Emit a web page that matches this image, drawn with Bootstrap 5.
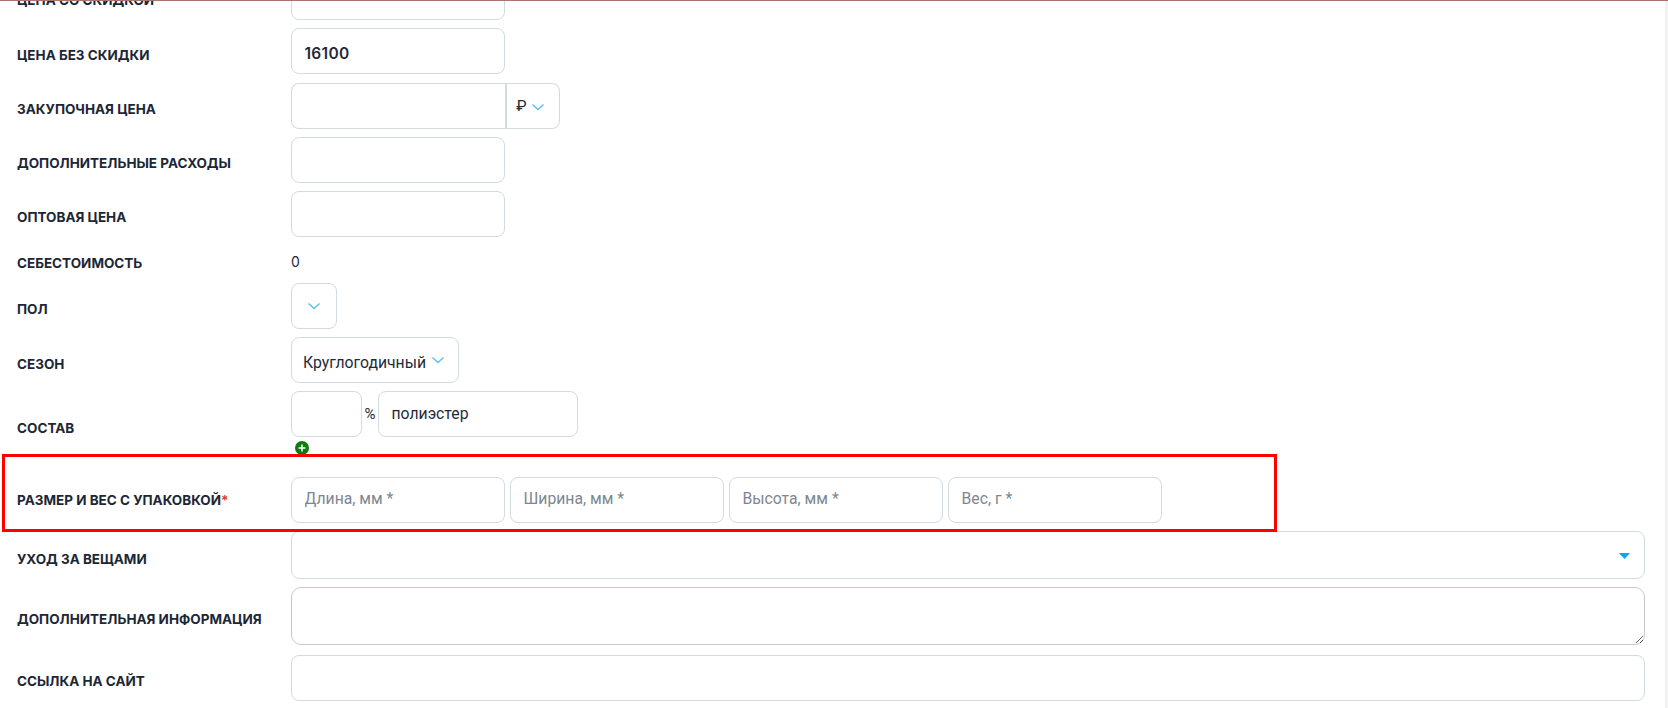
<!DOCTYPE html>
<html lang="ru"><head><meta charset="utf-8"><title>Форма</title>
<link rel="stylesheet" href="https://cdn.jsdelivr.net/npm/bootstrap@5.3.0/dist/css/bootstrap.min.css">
<style>
html,body{height:708px;overflow:hidden;background:#fff}
body{font-family:Roboto,sans-serif;color:#1f2a37;font-size:15.75px}
.topline{height:1px;background:#a5756e;position:absolute;top:0;left:0;right:0;z-index:5}
.sbar{position:absolute;top:1px;right:0;bottom:0;width:3px;background:#f1f1f1}
.formwrap{margin-top:-26px;padding:0 23px 0 17px}
.frow{margin-bottom:8.25px}
.flabel{width:274px;flex:none;font-family:Inter,sans-serif;font-weight:700;font-size:13.5px;text-transform:uppercase;color:#1c2735;padding-top:7px;margin:0}
.flabel i{color:#e53935;font-style:normal}
.fld{height:46px;border:1px solid #d3dbe0;border-radius:8px;background:#fff;padding:0 12.5px;font-size:15.75px;color:#1f2a37;font-family:Roboto,sans-serif}
.fld::placeholder{color:#7d8790;opacity:1}
.w214{width:214px}.w71{width:71px}.w200{width:200px}
.pricev{font-family:Inter,sans-serif;font-weight:600;font-size:15.5px;letter-spacing:.02em;padding-top:5px}
.joinl{border-radius:8px 0 0 8px;border-right:0}
.selbox{height:46px;border:1px solid #d3dbe0;border-radius:8px;gap:4px}
.cur{width:55px;border-left-width:2px;border-radius:0 8px 8px 0;font-size:15.5px;padding:2px 5px 0 0}
.w46{width:46px}.w168{width:168px;padding:0 0 0 11px;gap:5px}
.seztext{padding-top:6px}
.chev{width:14px;height:8px;flex:none}
.static0{height:29.5px;font-size:14px;font-family:Inter,sans-serif;padding-top:3px}
.pct{font-size:15px;width:16px;text-align:center}
.addbtn{width:14px;height:14px;margin:4.5px 0 0 4px;display:block}
.redbox{border:3px solid #f00;position:absolute;left:2px;top:454px;width:1275px;height:78px;z-index:4;pointer-events:none}
.sezrow{margin-bottom:7.5px}
.lblcomp{padding-top:11px}
.sizerow{margin-top:22px;margin-bottom:8px}
.lblsize{padding:0 0 1px}
.sizes{gap:5px}
.sizes .fld{padding-bottom:3px}
.carerow{margin-bottom:7.25px}
.care{height:48px;position:relative}
.caret{position:absolute;right:14px;top:21px;width:11px;height:6px}
.txa{height:58px;border-color:#c8c8c8;border-radius:10px;padding:8px 13px}
.txrow{margin-bottom:10px}
</style></head><body>
<div class="topline"></div>
<div class="sbar"></div>
<div class="redbox"></div>
<form class="formwrap">
 <div class="frow d-flex align-items-center"><label class="flabel">Цена со скидкой</label><input class="form-control fld w214"></div>
 <div class="frow d-flex align-items-center"><label class="flabel">Цена без скидки</label><input class="form-control fld w214 pricev" value="16100"></div>
 <div class="frow d-flex align-items-center"><label class="flabel">Закупочная цена</label><input class="form-control fld w214 joinl"><div class="selbox cur d-flex align-items-center justify-content-center">₽<svg class="chev" viewBox="0 0 14 8"><path d="M1.5 1.5 7 6.5l5.5-5" fill="none" stroke="#55c0ee" stroke-width="1.3"/></svg></div></div>
 <div class="frow d-flex align-items-center"><label class="flabel">Дополнительные расходы</label><input class="form-control fld w214"></div>
 <div class="frow d-flex align-items-center"><label class="flabel">Оптовая цена</label><input class="form-control fld w214"></div>
 <div class="frow d-flex align-items-center"><label class="flabel">Себестоимость</label><div class="static0 d-flex align-items-center">0</div></div>
 <div class="frow d-flex align-items-center"><label class="flabel">Пол</label><div class="selbox w46 d-flex align-items-center justify-content-center"><svg class="chev" viewBox="0 0 14 8"><path d="M1.5 1.5 7 6.5l5.5-5" fill="none" stroke="#55c0ee" stroke-width="1.3"/></svg></div></div>
 <div class="sezrow d-flex align-items-center"><label class="flabel">Сезон</label><div class="selbox w168 d-flex align-items-center"><span class="seztext">Круглогодичный</span><svg class="chev" viewBox="0 0 14 8"><path d="M1.5 1.5 7 6.5l5.5-5" fill="none" stroke="#55c0ee" stroke-width="1.3"/></svg></div></div>
 <div class="d-flex align-items-center"><label class="flabel lblcomp">Состав</label>
  <div>
   <div class="d-flex align-items-center"><input class="form-control fld w71"><span class="pct">%</span><input class="form-control fld w200" value="полиэстер"></div>
   <svg class="addbtn" viewBox="0 0 14 14"><circle cx="7" cy="7" r="7" fill="#0a7d0a"/><path d="M7 3.5v7M3.5 7h7" stroke="#fff" stroke-width="1.5"/></svg>
  </div>
 </div>
 <div class="sizerow d-flex align-items-center"><label class="flabel lblsize">Размер и вес с упаковкой<i>*</i></label><div class="sizes d-flex"><input class="form-control fld w214" placeholder="Длина, мм *"><input class="form-control fld w214" placeholder="Ширина, мм *"><input class="form-control fld w214" placeholder="Высота, мм *"><input class="form-control fld w214" placeholder="Вес, г *"></div></div>
 <div class="carerow d-flex align-items-center"><label class="flabel">Уход за вещами</label><div class="fld care flex-grow-1"><svg class="caret" viewBox="0 0 11 6"><path d="M0 0h11L5.5 6z" fill="#0aa5ee"/></svg></div></div>
 <div class="txrow d-flex align-items-center"><label class="flabel">Дополнительная информация</label><textarea class="form-control fld txa flex-grow-1 w-auto"></textarea></div>
 <div class="frow d-flex align-items-center"><label class="flabel">Ссылка на сайт</label><input class="form-control fld flex-grow-1 w-auto"></div>
</form>
<script src="https://cdn.jsdelivr.net/npm/bootstrap@5.3.0/dist/js/bootstrap.bundle.min.js"></script>
</body></html>
